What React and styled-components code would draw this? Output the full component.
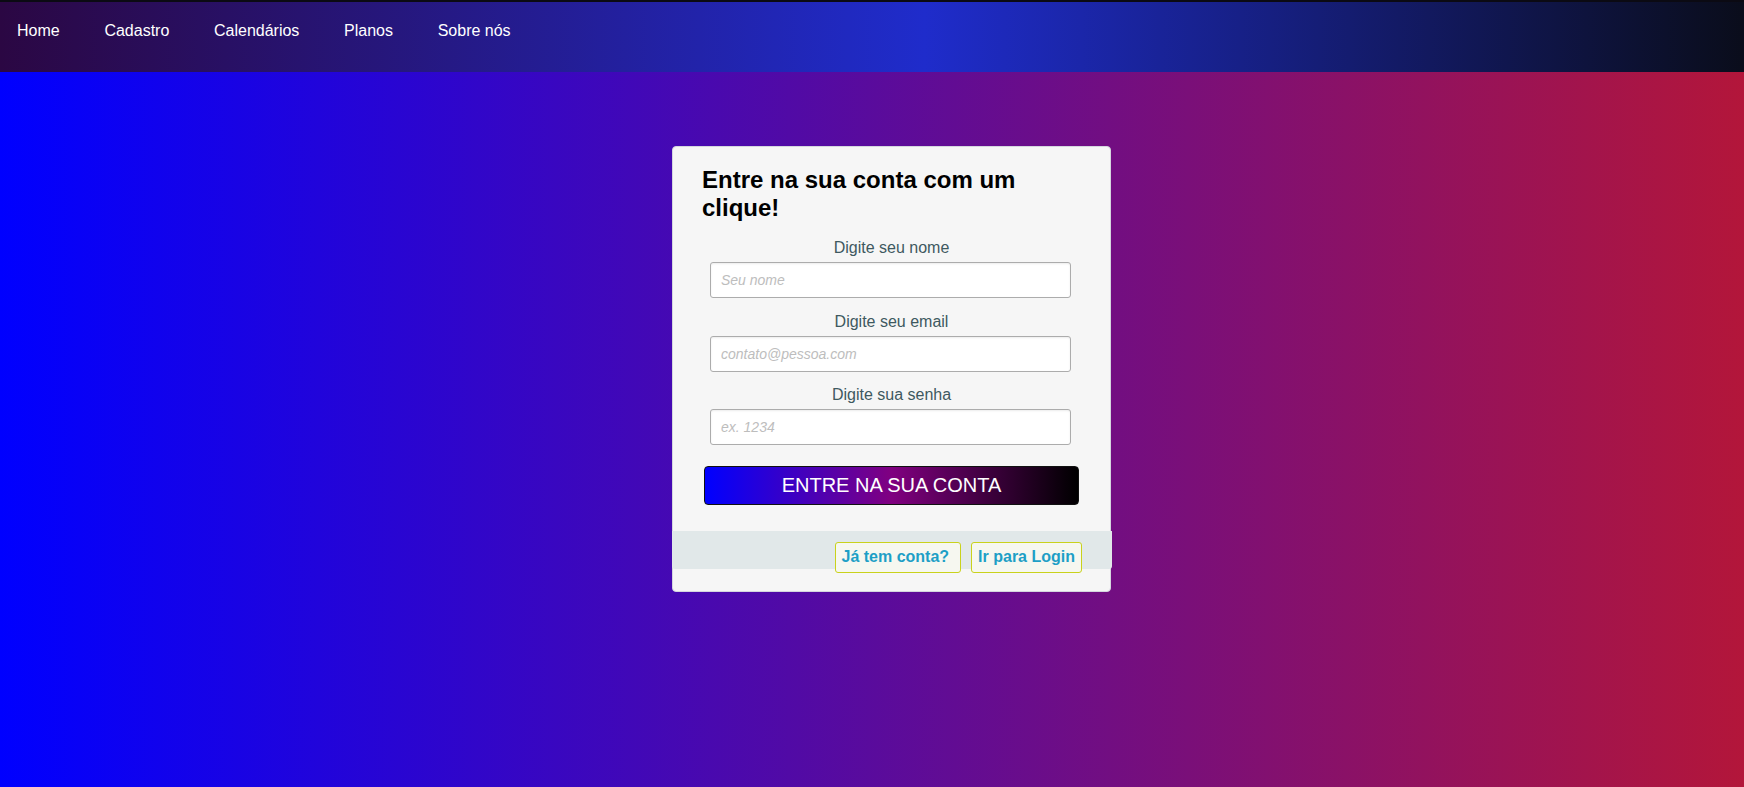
import React from 'react';
import styled, { createGlobalStyle } from 'styled-components';

const GlobalStyle = createGlobalStyle`
  html, body {
    margin: 0;
    padding: 0;
  }
  body {
    min-height: 100vh;
    font-family: "Liberation Sans", Arial, sans-serif;
    background: linear-gradient(to right, #0000ff 0%, #b3163a 100%);
  }
`

const Page = styled.div`
  min-height: 100vh;
  display: flex;
  flex-direction: column;
`

const Header = styled.header`
  height: 70px;
  box-sizing: content-box;
  border-top: 2px solid #0b0a13;
  background: linear-gradient(to right, #2b0743 0%, #1f2ccb 53%, #0a0d1b 100%);
`

const NavList = styled.ul`
  list-style: none;
  margin: 0;
  padding: 20px 0 0 17px;
  display: flex;
  gap: 44.7px;
`

const NavLink = styled.a`
  color: #ffffff;
  font-size: 16px;
  text-decoration: none;
  cursor: pointer;
`

const Main = styled.main`
  display: flex;
  justify-content: center;
  padding: 74px 0 0 39px;
`

const Card = styled.div`
  width: 439px;
  box-sizing: border-box;
  padding: 19px 29px 22px;
  border: 1px solid #d4d6de;
  border-radius: 4px;
  background: #f6f6f6;
  display: flex;
  flex-direction: column;
`

const Title = styled.h2`
  margin: 0 0 17px;
  font-size: 24px;
  font-weight: bold;
  color: #000;
`

const Form = styled.form`
  display: flex;
  flex-direction: column;
  gap: 14.6px;
`

const Field = styled.div`
  display: flex;
  flex-direction: column;
  align-items: center;
  gap: 5px;
`

const Label = styled.label`
  font-size: 16px;
  color: #3e5960;
`

const Input = styled.input`
  width: 361px;
  height: 36px;
  margin-right: 2px;
  box-sizing: border-box;
  padding: 0 10px;
  border: 1px solid #acacac;
  border-radius: 3px;
  background: #fff;
  box-shadow: inset 0 1px 2px rgba(0, 0, 0, 0.08);
  font-family: "Liberation Sans", Arial, sans-serif;
  font-size: 14px;
  outline: none;

  &::placeholder {
    color: #bdbdbd;
    font-style: italic;
  }
`

const Submit = styled.button`
  align-self: center;
  width: 375px;
  height: 39px;
  margin-top: 6px;
  border: 1px solid #111;
  border-radius: 4px;
  background: linear-gradient(to right, #0000ff 0%, #800080 50%, #000000 100%);
  color: #fff;
  font-family: "Liberation Sans", Arial, sans-serif;
  font-size: 20px;
  cursor: pointer;
`

const Footer = styled.div`
  height: 38px;
  margin: 26px -31px 0 -30px;
  padding: 11px 30px 0 0;
  box-sizing: border-box;
  background: #e1e8e9;
  border-radius: 0 0 3px 3px;
  display: flex;
  justify-content: flex-end;
  align-items: flex-start;
  gap: 10px;
`

const FooterButton = styled.a`
  height: 31px;
  box-sizing: border-box;
  padding: 0 ${p => (p.$extra ? '11px' : '6px')} 0 6px;
  display: flex;
  align-items: center;
  border: 1px solid #c9d21c;
  border-radius: 3px;
  background: #f6f7f0;
  color: #1d9fc6;
  font-size: 16px;
  font-weight: bold;
  text-decoration: none;
  cursor: pointer;
`

const links = ['Home', 'Cadastro', 'Calendários', 'Planos', 'Sobre nós']

function Nav() {
  return (
    <Header>
      <NavList>
        {links.map(l => (
          <li key={l}><NavLink>{l}</NavLink></li>
        ))}
      </NavList>
    </Header>
  )
}

function LoginCard() {
  return (
    <Card>
      <Title>Entre na sua conta com um clique!</Title>
      <Form onSubmit={e => e.preventDefault()}>
        <Field>
          <Label>Digite seu nome</Label>
          <Input placeholder="Seu nome" />
        </Field>
        <Field>
          <Label>Digite seu email</Label>
          <Input placeholder="contato@pessoa.com" />
        </Field>
        <Field>
          <Label>Digite sua senha</Label>
          <Input type="password" placeholder="ex. 1234" />
        </Field>
        <Submit type="submit">ENTRE NA SUA CONTA</Submit>
      </Form>
      <Footer>
        <FooterButton $extra>Já tem conta?</FooterButton>
        <FooterButton>Ir para Login</FooterButton>
      </Footer>
    </Card>
  )
}

export default function App() {
  return (
    <Page>
      <GlobalStyle />
      <Nav />
      <Main>
        <LoginCard />
      </Main>
    </Page>
  )
}
